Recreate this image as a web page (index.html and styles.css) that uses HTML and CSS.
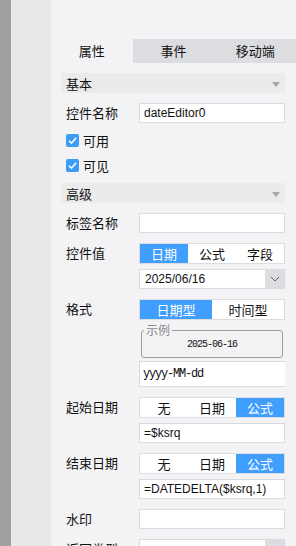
FILE: index.html
```html
<!DOCTYPE html>
<html lang="zh-CN">
<head>
    <meta charset="UTF-8">
    <meta name="viewport" content="width=device-width, initial-scale=1.0">
    <title>属性面板</title>
    <link rel="stylesheet" href="styles.css">
</head>
<body>
    <div class="app">
        <div class="rail"></div>
        <div class="side"></div>
        <div class="panel">
            <div class="tabs">
                <div class="tab active">属性</div>
                <div class="tab">事件</div>
                <div class="tab">移动端</div>
            </div>

            <div class="groupHead">基本<span class="caret"></span></div>
            <div class="row">
                <div class="label">控件名称</div>
                <div class="field"><input class="input" value="dateEditor0"></div>
            </div>
            <div class="checkRow"><span class="check"><svg width="13" height="13" viewBox="0 0 13 13"><path d="M3 6.8 L5.4 9.2 L10.2 3.8" fill="none" stroke="#fff" stroke-width="1.6"/></svg></span>可用</div>
            <div class="checkRow"><span class="check"><svg width="13" height="13" viewBox="0 0 13 13"><path d="M3 6.8 L5.4 9.2 L10.2 3.8" fill="none" stroke="#fff" stroke-width="1.6"/></svg></span>可见</div>

            <div class="groupHead second">高级<span class="caret"></span></div>
            <div class="row">
                <div class="label">标签名称</div>
                <div class="field"><input class="input" value=""></div>
            </div>
            <div class="row">
                <div class="label">控件值</div>
                <div class="field">
                    <div class="seg">
                        <div class="segItem on">日期</div>
                        <div class="segItem">公式</div>
                        <div class="segItem">字段</div>
                    </div>
                    <div class="select">
                        <div class="selectText">2025/06/16</div>
                        <div class="selectBtn"><svg width="10" height="6" viewBox="0 0 10 6"><path d="M1 1 L5 5 L9 1" fill="none" stroke="#666" stroke-width="1"/></svg></div>
                    </div>
                </div>
            </div>
            <div class="row">
                <div class="label">格式</div>
                <div class="field">
                    <div class="seg">
                        <div class="segItem on">日期型</div>
                        <div class="segItem">时间型</div>
                    </div>
                    <fieldset class="sample">
                        <legend>示例</legend>
                        <div class="sampleText">2025-06-16</div>
                    </fieldset>
                    <input class="input mono" value="yyyy-MM-dd">
                </div>
            </div>
            <div class="row">
                <div class="label">起始日期</div>
                <div class="field">
                    <div class="seg">
                        <div class="segItem">无</div>
                        <div class="segItem">日期</div>
                        <div class="segItem on">公式</div>
                    </div>
                    <input class="input" value="=$ksrq">
                </div>
            </div>
            <div class="row">
                <div class="label">结束日期</div>
                <div class="field">
                    <div class="seg">
                        <div class="segItem">无</div>
                        <div class="segItem">日期</div>
                        <div class="segItem on">公式</div>
                    </div>
                    <input class="input" value="=DATEDELTA($ksrq,1)">
                </div>
            </div>
            <div class="row">
                <div class="label">水印</div>
                <div class="field"><input class="input" value=""></div>
            </div>
            <div class="row">
                <div class="label">返回类型</div>
                <div class="field">
                    <div class="select">
                        <div class="selectText"></div>
                        <div class="selectBtn"></div>
                    </div>
                </div>
            </div>
        </div>
    </div>
</body>
</html>
```

FILE: styles.css
```css
body{
    margin: 0;
    padding: 0;
    font-family: "Noto Sans CJK SC", sans-serif;
    font-size: 13px;
    color: #111;
    overflow: hidden;
}
.app{
    display: flex;
    height: 546px;
}
.rail{
    width: 11px;
    background-color: #a0a0a0;
}
.side{
    width: 40px;
    background-color: #e8e8e8;
}
.panel{
    flex: 1;
    background-color: #f3f3f5;
    padding-top: 39px;
}
.tabs{
    display: flex;
    height: 24px;
}
.tab{
    flex: 1;
    text-align: center;
    line-height: 24px;
    background-color: #dcdde0;
}
.tab.active{
    background-color: #f3f3f5;
}
.groupHead{
    display: flex;
    align-items: center;
    justify-content: space-between;
    margin: 10px 11px 0 10px;
    height: 20px;
    padding: 0 5px;
    background-color: #ebebeb;
}
.groupHead.second{
    margin-top: 5px;
}
.caret{
    margin-top: 3px;
    border-top: 5px solid #a8a8a8;
    border-left: 4px solid transparent;
    border-right: 4px solid transparent;
}
.row{
    display: flex;
    margin: 10px 11px 0 15px;
}
.label{
    width: 73px;
    line-height: 20px;
}
.field{
    flex: 1;
    display: flex;
    flex-direction: column;
    gap: 5px;
}
.input{
    box-sizing: border-box;
    height: 20px;
    width: 100%;
    margin: 0;
    padding: 0 4px;
    border: 1px solid #d9dadd;
    background-color: #fff;
    font-family: "Liberation Sans", Arial, sans-serif;
    font-size: 12px;
    color: #111;
    outline: none;
}
.input.mono{
    height: 26px;
    padding-left: 3px;
    border-right: none;
    font-family: "Liberation Mono", monospace;
    letter-spacing: -1.2px;
}
.checkRow{
    display: flex;
    align-items: center;
    gap: 4px;
    height: 25px;
    margin: 5px 0 0 15px;
}
.checkRow + .checkRow{
    margin-top: 0;
}
.check{
    width: 13px;
    height: 13px;
    border-radius: 2px;
    background-color: #3d9cf6;
    display: flex;
}
.seg{
    display: flex;
    height: 21px;
    box-sizing: border-box;
    border: 1px solid #dcdde0;
    background-color: #fff;
}
.segItem{
    flex: 1;
    text-align: center;
    line-height: 19px;
}
.segItem.on{
    background-color: #409eff;
    color: #fff;
}
.select{
    display: flex;
    height: 20px;
    box-sizing: border-box;
    border: 1px solid #d9dadd;
    background-color: #fff;
}
.selectText{
    flex: 1;
    padding-left: 5px;
    line-height: 18px;
    font-family: "Liberation Sans", Arial, sans-serif;
    font-size: 12px;
}
.selectBtn{
    width: 19px;
    background-color: #dcdde0;
    display: flex;
    align-items: center;
    justify-content: center;
}
.sample{
    margin: 0 2px -2px 2px;
    padding: 0 0 2px 0;
    border: 1px solid #9c9c9c;
    border-radius: 3px;
}
.sample legend{
    margin-left: 2px;
    padding: 0 2px;
    font-size: 12px;
    line-height: 10px;
    color: #8c8c8c;
}
.sampleText{
    text-align: center;
    line-height: 20px;
    font-family: "Liberation Mono", monospace;
    font-size: 10px;
    letter-spacing: -1px;
}
```
